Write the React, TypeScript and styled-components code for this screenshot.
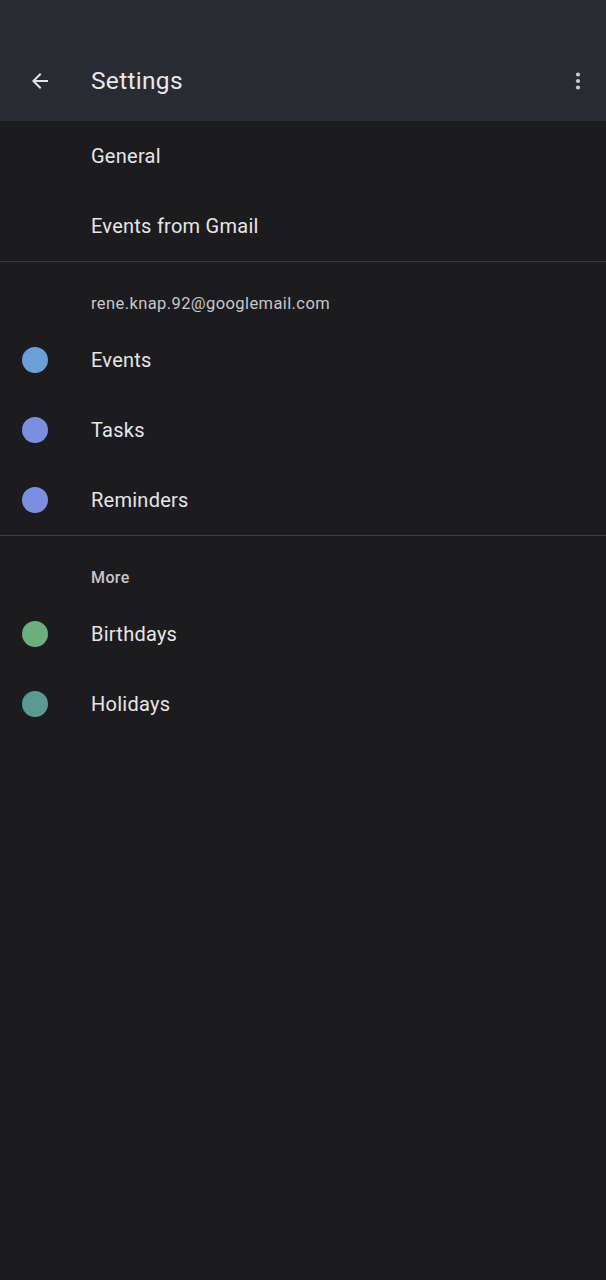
import React from 'react';
import styled, { createGlobalStyle } from 'styled-components';

const GlobalStyle = createGlobalStyle`
  html, body {
    margin: 0;
    padding: 0;
    background: #1c1c1e;
  }
  body {
    font-family: Roboto, 'Noto Sans', Arial, sans-serif;
    -webkit-font-smoothing: antialiased;
  }
`;

type Item = { label: string; color?: string };

const topItems: Item[] = [{ label: 'General' }, { label: 'Events from Gmail' }];

const accountItems: Item[] = [
  { label: 'Events', color: '#6b9fd6' },
  { label: 'Tasks', color: '#7b8fe2' },
  { label: 'Reminders', color: '#7b8fe2' },
];

const moreItems: Item[] = [
  { label: 'Birthdays', color: '#6cae7c' },
  { label: 'Holidays', color: '#5b9a92' },
];

export default function App() {
  return (
    <>
      <GlobalStyle />
      <Page>
        <SHeader>
          <SIconButton aria-label="back">
            <svg width="24" height="24" viewBox="0 0 24 24">
              <path
                d="M20 11H7.83l5.59-5.59L12 4l-8 8 8 8 1.41-1.41L7.83 13H20v-2z"
                fill="#e6e6e8"
              />
            </svg>
          </SIconButton>
          <STitle>Settings</STitle>
          <SMenuButton aria-label="more">
            <svg width="24" height="24" viewBox="0 0 24 24">
              <circle cx="12" cy="5.5" r="2.1" fill="#c9cad0" />
              <circle cx="12" cy="12" r="2.1" fill="#c9cad0" />
              <circle cx="12" cy="18.5" r="2.1" fill="#c9cad0" />
            </svg>
          </SMenuButton>
        </SHeader>

        <Section>
          {topItems.map((item) => (
            <Row key={item.label}>
              <DotSlot />
              <RowLabel>{item.label}</RowLabel>
            </Row>
          ))}
        </Section>

        <Divider />

        <Section>
          <SectionLabel>rene.knap.92@googlemail.com</SectionLabel>
          {accountItems.map((item) => (
            <Row key={item.label}>
              <DotSlot>
                <Dot $color={item.color} />
              </DotSlot>
              <RowLabel>{item.label}</RowLabel>
            </Row>
          ))}
        </Section>

        <Divider />

        <Section>
          <SectionLabel $small>More</SectionLabel>
          {moreItems.map((item) => (
            <Row key={item.label}>
              <DotSlot>
                <Dot $color={item.color} />
              </DotSlot>
              <RowLabel>{item.label}</RowLabel>
            </Row>
          ))}
        </Section>
      </Page>
    </>
  );
}

const Page = styled.div`
  width: 606px;
  min-height: 1280px;
  background: #1c1c1e;
`;

const SHeader = styled.header`
  height: 121px;
  background: #292b33;
  display: flex;
  align-items: flex-end;
  padding: 0 16px 22px 16px;
  box-sizing: border-box;
`;

const SIconButton = styled.div`
  width: 48px;
  height: 36px;
  display: flex;
  align-items: center;
  justify-content: center;
`;

const SMenuButton = styled(SIconButton)`
  margin-left: auto;
  width: 28px;
  margin-right: -2px;
`;

const STitle = styled.h1`
  margin: 0 0 0 27px;
  font-size: 24.5px;
  font-weight: 400;
  color: #e8e8ea;
  line-height: 36px;
  letter-spacing: 0.3px;
`;

const Section = styled.div`
  display: flex;
  flex-direction: column;
`;

const Row = styled.div`
  height: 70px;
  display: flex;
  align-items: center;
`;

const DotSlot = styled.div`
  width: 91px;
  padding-left: 22px;
  box-sizing: border-box;
  display: flex;
  align-items: center;
`;

const Dot = styled.span<{ $color?: string }>`
  width: 26px;
  height: 26px;
  border-radius: 50%;
  background: ${(p) => p.$color};
`;

const RowLabel = styled.span`
  font-size: 20px;
  color: #e6e6e8;
  letter-spacing: 0.25px;
`;

const SectionLabel = styled.div<{ $small?: boolean }>`
  height: 63px;
  box-sizing: border-box;
  padding: 31px 0 0 91px;
  line-height: 22px;
  font-size: ${(p) => (p.$small ? '16px' : '16.5px')};
  font-weight: ${(p) => (p.$small ? 500 : 400)};
  color: #c6c7cc;
  letter-spacing: 0.4px;
`;

const Divider = styled.div`
  height: 1px;
  background: #3d3e42;
`;
